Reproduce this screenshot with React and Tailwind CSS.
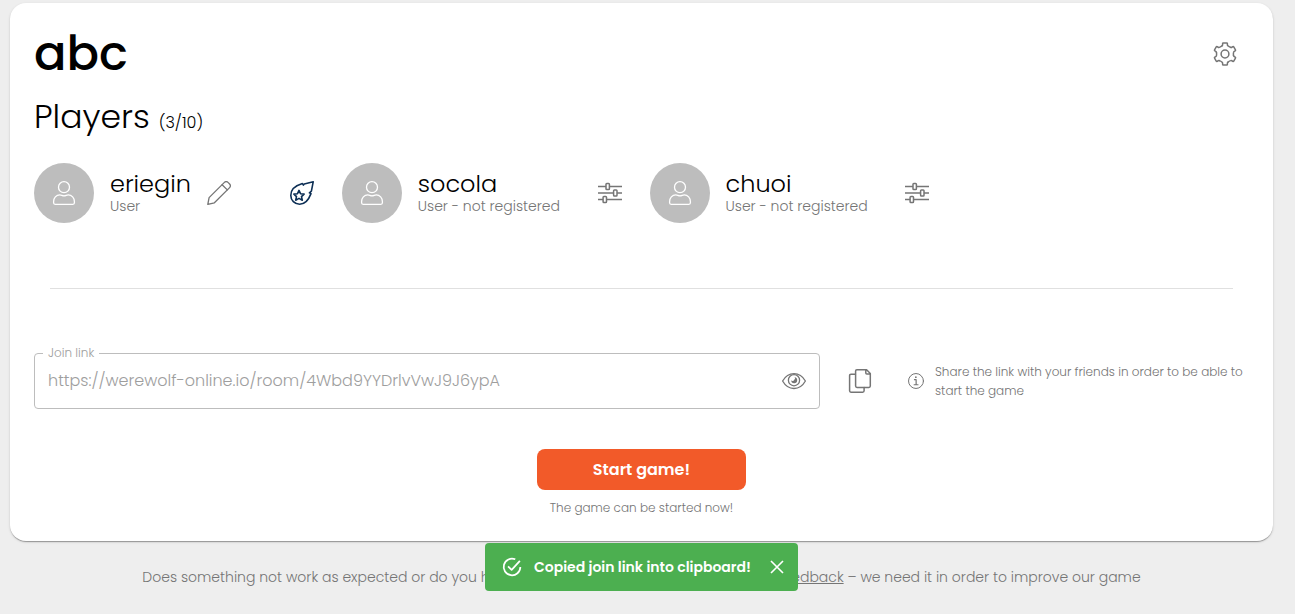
import React from "react";

function Icon({ children, className = "size-6", width = 1.4 }) {
  return (
    <svg
      viewBox="0 0 24 24"
      className={className}
      fill="none"
      stroke="currentColor"
      strokeWidth={width}
      strokeLinecap="round"
      strokeLinejoin="round"
      aria-hidden="true"
    >
      {children}
    </svg>
  );
}

const GearIcon = () => (
  <Icon width={1.5}>
    <circle cx="12" cy="12" r="3.9" />
    {[0, 60, 120, 180, 240, 300].map((angle) => (
      <path
        key={angle}
        transform={`translate(12 12) rotate(${angle})`}
        d="M-2.9-8.2Q-2.4-8.6-2.4-9.3V-10.4Q-2.4-11.1-1.7-11.1H1.7Q2.4-11.1 2.4-10.4V-9.3Q2.4-8.6 2.9-8.2Q4.1-7.1 5.65-6.6"
      />
    ))}
  </Icon>
);

const PersonIcon = () => (
  <Icon width={1.3}>
    <circle cx="12" cy="6.2" r="5.5" />
    <path d="M1.6 21.8V20.6C1.6 16.8 4.2 13.9 7.8 13.9C9.4 13.9 10.2 14.9 12 14.9C13.8 14.9 14.6 13.9 16.2 13.9C19.8 13.9 22.4 16.8 22.4 20.6V21.8Q22.4 23.3 20.9 23.3H3.1Q1.6 23.3 1.6 21.8Z" />
  </Icon>
);

const PencilIcon = () => (
  <Icon width={1.3}>
    <path d="M.8 23.3L2.1 16.6L17.4 1.4Q18.2.6 19.2.6T21 1.4L22.6 3Q23.4 3.8 23.4 4.8T22.6 6.6L7.4 21.8L.8 23.3Z" />
    <path d="M15.1 3.7L20.3 8.9" />
  </Icon>
);

const CometIcon = () => (
  <Icon width={1.6}>
    <path d="M23.2.8L14.2 3L13.4 4.1L12.4 2.6C5.6 4.6.8 8.6.8 14.4C.8 19.4 4.7 23.2 9.6 23.2C14.9 23.2 18.8 18.4 21 12.6L19.4 11.8L21.4 10.2Z" />
    <path d="M9 9.4L10.5 12.7L14.1 13.1L11.5 15.6L12.3 19.2L9 17.4L5.7 19.2L6.5 15.6L3.9 13.1L7.5 12.7Z" />
  </Icon>
);

const SlidersIcon = () => (
  <Icon width={1.5}>
    <path strokeLinecap="butt" d="M0 5.5H8M11.5 5.5H24M0 12H15.5M19 12H24M0 18.5H5M8.5 18.5H24" />
    <rect x="8" y="2.4" width="3.4" height="6.2" rx=".8" />
    <rect x="15.6" y="8.9" width="3.4" height="6.2" rx=".8" />
    <rect x="5.1" y="15.4" width="3.4" height="6.2" rx=".8" />
  </Icon>
);

const EyeIcon = () => (
  <Icon width={1.3}>
    <path d="M.6 12C3.2 7.4 7.4 4.6 12 4.6S20.8 7.4 23.4 12C20.8 16.6 16.6 19.5 12 19.5S3.2 16.6.6 12Z" />
    <circle cx="12" cy="11.2" r="5.6" />
    <path fill="currentColor" stroke="none" d="M12.6 8.3A3 3 0 1 1 9.2 11.3A1.7 1.7 0 0 0 12.3 10.8A1.7 1.7 0 0 0 12.6 8.3Z" />
  </Icon>
);

const CopyIcon = () => (
  <Icon width={1.5}>
    <path d="M7.6 17.1V2.1Q7.6.8 8.9.8H18.6L22.3 4.5V17Q22.3 18.4 20.9 18.4H9Q7.6 18.4 7.6 17.1M17.8.9V4Q17.8 5 18.8 5H22.2" />
    <path d="M7.4 5.2H3Q1.6 5.2 1.6 6.6V21.8Q1.6 23.2 3 23.2H14.7Q16.1 23.2 16.1 21.8V18.6" />
  </Icon>
);

const InfoIcon = () => (
  <Icon className="size-4 shrink-0" width={1.5}>
    <circle cx="12" cy="12" r="11.2" />
    <path strokeWidth="1.8" d="M9.7 10H12.2V17.4M9.2 17.6H15" />
    <circle cx="11.8" cy="6.3" r="1.3" fill="currentColor" stroke="none" />
  </Icon>
);

const CheckIcon = () => (
  <Icon className="size-[22px]" width={1.9}>
    <path strokeLinecap="butt" d="M15.6 3.6A9.1 9.1 0 1 0 21.1 12M7.7 11.2L11.6 15.1L20.6 5.3" />
  </Icon>
);

const players = [
  { name: "eriegin", role: "User", self: true },
  { name: "socola", role: "User - not registered" },
  { name: "chuoi", role: "User - not registered" },
];

function IconButton({ label, className = "text-[#757575]", children }) {
  return (
    <button type="button" aria-label={label} className={`shrink-0 rounded-full p-3 ${className}`}>
      {children}
    </button>
  );
}

function Player({ name, role, self }) {
  return (
    <li className="flex items-center">
      <span className="flex size-[60px] shrink-0 items-center justify-center rounded-full bg-[#bdbdbd] text-white">
        <PersonIcon />
      </span>
      <div className="mr-1 ml-4 pb-0.5">
        <p className="text-2xl leading-7 text-black">{name}</p>
        <p className="text-sm leading-4 text-[#757575]">{role}</p>
      </div>
      {self && (
        <IconButton label="Edit name">
          <PencilIcon />
        </IconButton>
      )}
      <div className="ml-auto flex">
        {self ? (
          <IconButton label="Room host" className="text-[#0d2f55]">
            <CometIcon />
          </IconButton>
        ) : (
          <IconButton label={`Manage ${name}`}>
            <SlidersIcon />
          </IconButton>
        )}
      </div>
    </li>
  );
}

export default function App() {
  return (
    <div className="min-h-screen bg-[#eeeeee] pt-[3px] pr-[22px] pl-[10px] font-['Poppins','Inter',sans-serif] font-light">
      <main className="rounded-2xl bg-white px-6 pt-6 pb-[23px] shadow-[0_2px_1px_-1px_rgba(0,0,0,0.2),0_1px_1px_rgba(0,0,0,0.14),0_1px_3px_rgba(0,0,0,0.12)]">
        <header className="flex items-center justify-between">
          <h1 className="text-5xl leading-[54px] font-medium text-black">abc</h1>
          <IconButton label="Room settings">
            <GearIcon />
          </IconButton>
        </header>
        <h2 className="mt-4 text-[33px] leading-10 text-black">
          Players <span className="text-base">(3/10)</span>
        </h2>
        <ul className="mt-[26px] grid grid-cols-4 gap-4">
          {players.map((player) => (
            <Player key={player.name} {...player} />
          ))}
        </ul>
        <hr className="mx-4 mt-[65px] border-[#e0e0e0]" />
        <div className="mt-16 flex items-center">
          <div className="relative flex h-14 flex-1 items-center rounded border border-[#bdbdbd] pr-[1px] pl-[13px]">
            <label
              htmlFor="join-link"
              className="absolute -top-[9px] left-2 bg-white px-[5px] text-xs leading-4 text-[#9e9e9e]"
            >
              Join link
            </label>
            <input
              id="join-link"
              readOnly
              defaultValue="https://werewolf-online.io/room/4Wbd9YYDrlvVwJ9J6ypA"
              className="min-w-0 flex-1 bg-transparent text-base text-[#9e9e9e] outline-none"
            />
            <IconButton label="Show link">
              <EyeIcon />
            </IconButton>
          </div>
          <div className="mr-6 ml-4 flex">
            <IconButton label="Copy join link">
              <CopyIcon />
            </IconButton>
          </div>
          <div className="flex w-[341px] items-center gap-[11px] text-[#757575]">
            <InfoIcon />
            <p className="text-xs leading-[19px]">
              Share the link with your friends in order to be able to start the game
            </p>
          </div>
        </div>
        <div className="mt-10 flex flex-col items-center">
          <button
            type="button"
            className="h-[41px] w-[209px] rounded-lg bg-[#f25a29] text-base font-semibold text-white"
          >
            Start game!
          </button>
          <p className="mt-2 text-xs leading-5 text-[#757575]">The game can be started now!</p>
        </div>
      </main>
      <footer className="mt-[26px] text-center text-sm leading-5 text-[#757575]">
        Does something not work as expected or do you have any suggestion? Please send us your{" "}
        <a href="#feedback" className="underline">
          feedback
        </a>{" "}
        – we need it in order to improve our game
      </footer>
      <div className="fixed inset-x-0 bottom-[23px] flex justify-center pr-3">
        <div
          role="status"
          className="flex h-12 w-[313px] items-center rounded bg-[#4caf50] pr-3 pl-4 text-sm font-semibold text-white"
        >
          <CheckIcon />
          <span className="ml-[11px]">Copied join link into clipboard!</span>
          <button type="button" aria-label="Dismiss" className="ml-auto">
            <Icon className="size-[18px]" width={2.2}>
              <path strokeLinecap="butt" d="M4 4L20 20M20 4L4 20" />
            </Icon>
          </button>
        </div>
      </div>
    </div>
  );
}
